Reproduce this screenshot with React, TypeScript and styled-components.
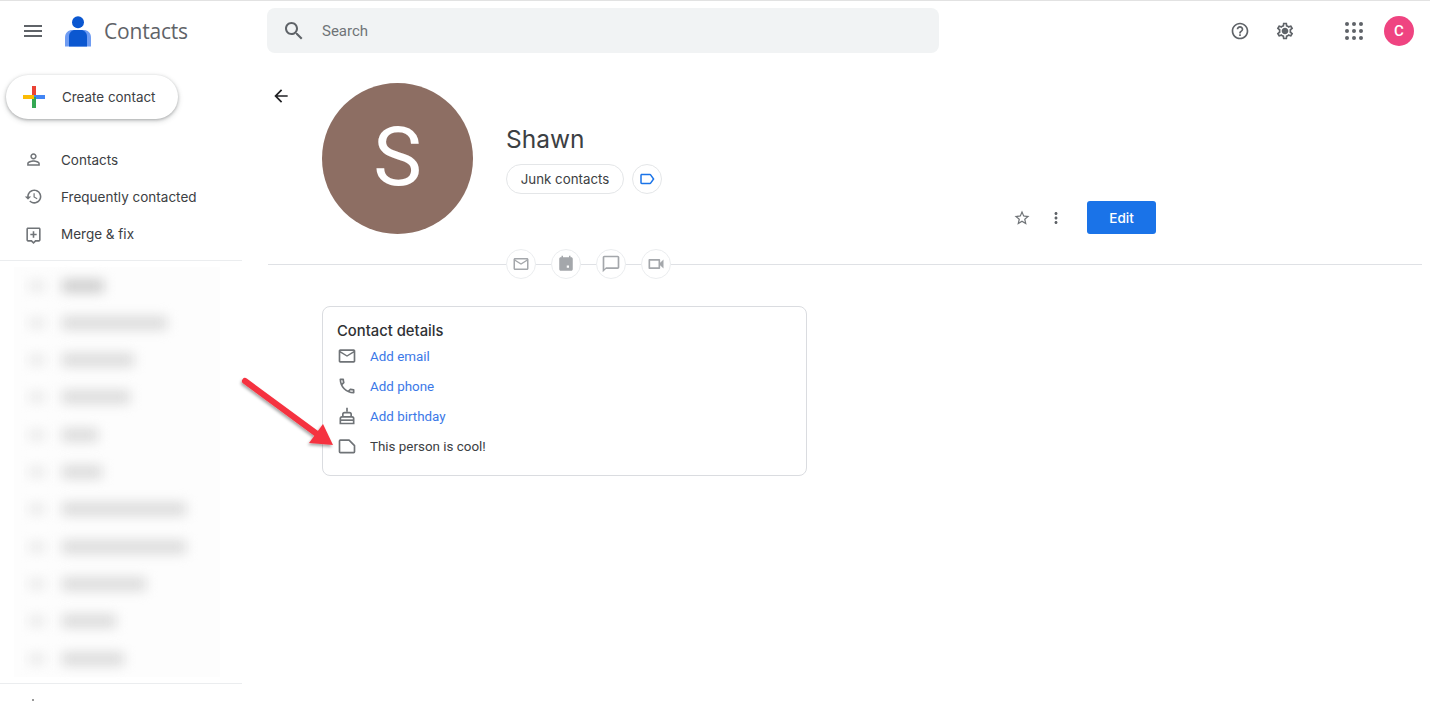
import React from "react";
import styled, { createGlobalStyle } from "styled-components";

const Global = createGlobalStyle`
  html, body { margin: 0; padding: 0; background: #fff; }
  body { font-family: Roboto, "Liberation Sans", sans-serif; overflow: hidden; }
  * { box-sizing: border-box; }
`;

const Page = styled.div`
  position: relative;
  width: 1430px;
  height: 702px;
  overflow: hidden;
  border-top: 1px solid #e2e2e2;
  display: flex;
  flex-direction: column;
`;

const Header = styled.header`
  height: 60px;
  flex: none;
  display: flex;
  align-items: center;
  padding-left: 21px;
`;
const HeaderLeft = styled.div`
  width: 246px;
  display: flex;
  align-items: center;
`;
const MenuGap = styled.span`
  width: 20px;
  flex: none;
`;
const BrandName = styled.span`
  font-family: "Open Sans", Roboto, sans-serif;
  font-size: 21px;
  color: #5f6368;
  margin-left: 13px;
  letter-spacing: -0.2px;
`;
const SearchBox = styled.div`
  width: 672px;
  height: 45px;
  margin-top: -1px;
  background: #f1f3f4;
  border-radius: 8px;
  display: flex;
  align-items: center;
  padding-left: 15px;
  gap: 16px;
  font-size: 15px;
  color: #6f7377;
`;
const HeaderRight = styled.div`
  margin-left: 291px;
  display: flex;
  align-items: center;
`;
const AppGroup = styled.div`
  margin-left: 47px;
  display: flex;
  align-items: center;
  gap: 18px;
`;
const Gap = styled.div`
  width: 25px;
  flex: none;
`;
const UserBadge = styled.div`
  width: 30px;
  height: 30px;
  border-radius: 50%;
  background: #ef4481;
  color: #fff;
  font-size: 15px;
  font-weight: 500;
  display: flex;
  align-items: center;
  justify-content: center;
`;

const Body = styled.div`
  flex: 1;
  display: flex;
  min-height: 0;
`;
const Sidebar = styled.aside`
  width: 242px;
  flex: none;
  padding-top: 14px;
`;
const CreateButton = styled.div`
  margin-left: 6px;
  width: 172px;
  height: 44px;
  border-radius: 22px;
  background: #fff;
  box-shadow: 0 1px 3px 0 rgba(60, 64, 67, 0.35), 0 2px 5px 1px rgba(60, 64, 67, 0.15);
  display: flex;
  align-items: center;
  padding-left: 16px;
  gap: 16px;
  font-family: Inter, Roboto, sans-serif;
  font-size: 13.4px;
  color: #3c4043;
`;
const Nav = styled.nav`
  margin-top: 22px;
  display: flex;
  flex-direction: column;
`;
const NavItem = styled.div`
  height: 37.3px;
  display: flex;
  align-items: center;
  padding-left: 24px;
  gap: 18px;
  font-family: Inter, Roboto, sans-serif;
  font-size: 13.5px;
  color: #3c4043;
`;
const SideRule = styled.div`
  height: 1px;
  background: #ebedef;
`;
const NavRule = styled(SideRule)`
  margin-top: 7px;
`;
const BlurList = styled.div`
  height: 422px;
  padding: 6px 22px 0 14px;
  overflow: hidden;
  display: flex;
  flex-direction: column;
`;
const BlurRow = styled.div`
  height: 37.3px;
  flex: none;
  display: flex;
  align-items: center;
  padding-left: 14px;
  background: #fdfdfd;
`;
const BlurIcon = styled.div`
  width: 18px;
  height: 14px;
  margin-right: 16px;
  flex: none;
  background: #f0f0f0;
  filter: blur(5px);
`;
const BlurBar = styled.div<{ $w: number; $dark?: boolean }>`
  width: ${(p) => p.$w}px;
  height: 14px;
  background: ${(p) => (p.$dark ? "#cfcfcf" : "#dcdcdc")};
  filter: blur(6px);
`;
const FooterMark = styled.div`
  width: 2px;
  height: 2px;
  margin: 15px 0 0 32px;
  background: #9a9a9a;
`;

const Main = styled.main`
  flex: 1;
  padding: 22px 8px 0 26px;
  display: flex;
  flex-direction: column;
`;
const Profile = styled.section`
  width: 888px;
  height: 151px;
  display: flex;
  flex: none;
`;
const BackCol = styled.div`
  width: 54px;
  flex: none;
  padding: 3px 0 0 3px;
`;
const Avatar = styled.div`
  width: 151px;
  height: 151px;
  flex: none;
  border-radius: 50%;
  background: #8d6e63;
  color: #fff;
  font-size: 82px;
  padding-bottom: 3px;
  display: flex;
  align-items: center;
  justify-content: center;
`;
const Identity = styled.div`
  margin-left: 33px;
  padding-top: 39px;
  display: flex;
  flex-direction: column;
`;
const Name = styled.h1`
  margin: 0;
  font-family: Inter, Roboto, sans-serif;
  font-weight: 400;
  font-size: 24.5px;
  line-height: 35px;
  color: #3c4043;
`;
const ChipRow = styled.div`
  margin-top: 7px;
  display: flex;
  gap: 8px;
`;
const Chip = styled.div`
  width: 118px;
  height: 30px;
  border: 1px solid #e4e6e8;
  border-radius: 15px;
  display: flex;
  align-items: center;
  justify-content: center;
  font-family: Inter, Roboto, sans-serif;
  font-size: 13.3px;
  color: #3c4043;
`;
const RoundChip = styled.div`
  width: 30px;
  height: 30px;
  border: 1px solid #e4e6e8;
  border-radius: 50%;
  display: flex;
  align-items: center;
  justify-content: center;
`;
const Actions = styled.div`
  margin-left: auto;
  align-self: flex-end;
  display: flex;
  align-items: center;
`;
const ActionGap = styled.span`
  width: 16px;
  flex: none;
`;
const EditButton = styled.div`
  margin-left: 22px;
  width: 69px;
  height: 33px;
  border-radius: 3px;
  background: #1a73e8;
  color: #fff;
  font-family: Inter, Roboto, sans-serif;
  font-size: 13.5px;
  font-weight: 500;
  display: flex;
  align-items: center;
  justify-content: center;
`;
const DividerRow = styled.div`
  margin-top: 15px;
  height: 30px;
  display: flex;
  align-items: center;
  flex: none;
`;
const RuleStart = styled.div`
  width: 238px;
  height: 1px;
  background: #dfe1e5;
`;
const RuleLink = styled.div`
  width: 15px;
  height: 1px;
  background: #dfe1e5;
`;
const RuleEnd = styled.div`
  flex: 1;
  height: 1px;
  background: #dfe1e5;
`;
const ActionCircle = styled.div`
  width: 30px;
  height: 30px;
  flex: none;
  border: 1px solid #ebedef;
  border-radius: 50%;
  display: flex;
  align-items: center;
  justify-content: center;
`;
const Card = styled.section`
  margin: 27px 0 0 54px;
  width: 485px;
  height: 170px;
  border: 1px solid #dadce0;
  border-radius: 8px;
  padding: 14px 14px 0;
`;
const CardTitle = styled.h2`
  margin: 0;
  font-family: Inter, Roboto, sans-serif;
  font-weight: 500;
  font-size: 14.8px;
  line-height: 20px;
  color: #2f3134;
`;
const DetailRow = styled.div`
  height: 30px;
  display: flex;
  align-items: center;
  gap: 13px;
  font-size: 13.4px;
`;
const DetailRows = styled.div`
  display: flex;
  flex-direction: column;
`;
const DetailLink = styled.span`
  color: #3b78e7;
`;
const DetailText = styled.span`
  color: #3c4043;
`;
const ArrowOverlay = styled.svg`
  position: absolute;
  left: 235px;
  top: 370px;
  overflow: visible;
`;

const Icon = ({ d, size = 24, color = "#5f6368" }: { d: string; size?: number; color?: string }) => (
  <svg width={size} height={size} viewBox="0 0 24 24" fill={color} style={{ flex: "none" }}>
    <path d={d} />
  </svg>
);

const P = {
  menu: "M3 18h18v-2H3v2zm0-5h18v-2H3v2zm0-7v2h18V6H3z",
  search:
    "M15.5 14h-.79l-.28-.27C15.41 12.59 16 11.11 16 9.5 16 5.91 13.09 3 9.5 3S3 5.91 3 9.5 5.91 16 9.5 16c1.61 0 3.09-.59 4.23-1.57l.27.28v.79l5 4.99L20.49 19l-4.99-5zm-6 0C7.01 14 5 11.99 5 9.5S7.01 5 9.5 5 14 7.01 14 9.5 11.99 14 9.5 14z",
  help: "M11 18h2v-2h-2v2zm1-16C6.48 2 2 6.48 2 12s4.48 10 10 10 10-4.48 10-10S17.52 2 12 2zm0 18c-4.41 0-8-3.59-8-8s3.59-8 8-8 8 3.59 8 8-3.59 8-8 8zm0-14c-2.21 0-4 1.79-4 4h2c0-1.1.9-2 2-2s2 .9 2 2c0 2-3 1.75-3 5h2c0-2.25 3-2.5 3-5 0-2.21-1.79-4-4-4z",
  gear: "M19.43 12.98c.04-.32.07-.64.07-.98 0-.34-.03-.66-.07-.98l2.11-1.65c.19-.15.24-.42.12-.64l-2-3.46c-.09-.16-.26-.25-.44-.25-.06 0-.12.01-.17.03l-2.49 1c-.52-.4-1.08-.73-1.69-.98l-.38-2.65C14.46 2.18 14.25 2 14 2h-4c-.25 0-.46.18-.49.42l-.38 2.65c-.61.25-1.17.59-1.69.98l-2.49-1c-.06-.02-.12-.03-.18-.03-.17 0-.34.09-.43.25l-2 3.46c-.13.22-.07.49.12.64l2.11 1.65c-.04.32-.07.65-.07.98 0 .33.03.66.07.98l-2.11 1.65c-.19.15-.24.42-.12.64l2 3.46c.09.16.26.25.44.25.06 0 .12-.01.17-.03l2.49-1c.52.4 1.08.73 1.69.98l.38 2.65c.03.24.24.42.49.42h4c.25 0 .46-.18.49-.42l.38-2.65c.61-.25 1.17-.59 1.69-.98l2.49 1c.06.02.12.03.18.03.17 0 .34-.09.43-.25l2-3.46c.12-.22.07-.49-.12-.64l-2.11-1.65zm-1.98-1.71c.04.31.05.52.05.73 0 .21-.02.43-.05.73l-.14 1.13.89.7 1.08.84-.7 1.21-1.27-.51-1.04-.42-.9.68c-.43.32-.84.56-1.25.73l-1.06.43-.16 1.13-.2 1.35h-1.4l-.19-1.35-.16-1.13-1.06-.43c-.43-.18-.83-.41-1.23-.71l-.91-.7-1.06.43-1.27.51-.7-1.21 1.08-.84.89-.7-.14-1.13c-.03-.31-.05-.54-.05-.74s.02-.43.05-.73l.14-1.13-.89-.7-1.08-.84.7-1.21 1.27.51 1.04.42.9-.68c.43-.32.84-.56 1.25-.73l1.06-.43.16-1.13.2-1.35h1.39l.19 1.35.16 1.13 1.06.43c.43.18.83.41 1.23.71l.91.7 1.06-.43 1.27-.51.7 1.21-1.07.85-.89.7.14 1.13zM12 8c-2.21 0-4 1.79-4 4s1.79 4 4 4 4-1.79 4-4-1.79-4-4-4z",
  person:
    "M12 5.9c1.16 0 2.1.94 2.1 2.1s-.94 2.1-2.1 2.1S9.9 9.16 9.9 8s.94-2.1 2.1-2.1m0 9c2.97 0 6.1 1.46 6.1 2.1v1.1H5.9V17c0-.64 3.13-2.1 6.1-2.1M12 4C9.79 4 8 5.79 8 8s1.79 4 4 4 4-1.79 4-4-1.79-4-4-4zm0 9c-2.67 0-8 1.34-8 4v3h16v-3c0-2.66-5.33-4-8-4z",
  history:
    "M13 3c-4.97 0-9 4.03-9 9H1l3.89 3.89.07.14L9 12H6c0-3.87 3.13-7 7-7s7 3.13 7 7-3.13 7-7 7c-1.93 0-3.68-.79-4.94-2.06l-1.42 1.42C8.27 19.99 10.51 21 13 21c4.97 0 9-4.03 9-9s-4.03-9-9-9zm-1 5v5l4.28 2.54.72-1.21-3.5-2.08V8H12z",
  merge:
    "M19 3H5c-1.1 0-2 .9-2 2v14c0 1.1.9 2 2 2h4l3 3 3-3h4c1.1 0 2-.9 2-2V5c0-1.1-.9-2-2-2zm0 16h-4.83l-2.17 2.17L9.83 19H5V5h14v14zM11 16h2v-3h3v-2h-3V8h-2v3H8v2h3z",
  back: "M20 11H7.83l5.59-5.59L12 4l-8 8 8 8 1.41-1.41L7.83 13H20v-2z",
  label:
    "M17.63 5.84C17.27 5.33 16.67 5 16 5L5 5.01C3.9 5.01 3 5.9 3 7v10c0 1.1.9 1.99 2 1.99L16 19c.67 0 1.27-.33 1.63-.84L22 12l-4.37-6.16zM16 17H5V7h11l3.55 5L16 17z",
  star: "M22 9.24l-7.19-.62L12 2 9.19 8.63 2 9.24l5.46 4.73L5.82 21 12 17.27 18.18 21l-1.63-7.03L22 9.24zM12 15.4l-3.76 2.27 1-4.28-3.32-2.88 4.38-.38L12 6.1l1.71 4.04 4.38.38-3.32 2.88 1 4.28L12 15.4z",
  more: "M12 8c1.1 0 2-.9 2-2s-.9-2-2-2-2 .9-2 2 .9 2 2 2zm0 2c-1.1 0-2 .9-2 2s.9 2 2 2 2-.9 2-2-.9-2-2-2zm0 6c-1.1 0-2 .9-2 2s.9 2 2 2 2-.9 2-2-.9-2-2-2z",
  mail: "M20 4H4c-1.1 0-2 .9-2 2v12c0 1.1.9 2 2 2h16c1.1 0 2-.9 2-2V6c0-1.1-.9-2-2-2zm0 14H4V8l8 5 8-5v10zm-8-7L4 6h16l-8 5z",
  event:
    "M19 3h-1V1h-2v2H8V1H6v2H5c-1.11 0-2 .9-2 2v14c0 1.1.89 2 2 2h14c1.1 0 2-.9 2-2V5c0-1.1-.9-2-2-2zm-3 11v3h-3v-3z",
  chat: "M20 2H4c-1.1 0-2 .9-2 2v18l4-4h14c1.1 0 2-.9 2-2V4c0-1.1-.9-2-2-2zm0 14H6l-2 2V4h16v12z",
  video:
    "M15 8v8H5V8h10m1-2H4c-.55 0-1 .45-1 1v10c0 .55.45 1 1 1h12c.55 0 1-.45 1-1v-3.5l4 4v-11l-4 4V7c0-.55-.45-1-1-1z",
  phone:
    "M6.54 5c.06.89.21 1.76.45 2.59l-1.2 1.2c-.41-1.2-.67-2.47-.76-3.79h1.51m9.86 12.02c.85.24 1.72.39 2.6.45v1.49c-1.32-.09-2.59-.35-3.8-.75l1.2-1.19M7.5 3H4c-.55 0-1 .45-1 1 0 9.39 7.61 17 17 17 .55 0 1-.45 1-1v-3.49c0-.55-.45-1-1-1-1.24 0-2.45-.2-3.57-.57-.1-.04-.21-.05-.31-.05-.26 0-.51.1-.71.29l-2.2 2.2c-2.83-1.45-5.15-3.76-6.59-6.59l2.2-2.2c.28-.28.36-.67.25-1.02C8.7 6.45 8.5 5.25 8.5 4c0-.55-.45-1-1-1z",
};

const AppsIcon = () => (
  <svg width="24" height="24" viewBox="0 0 24 24" fill="#5f6368" style={{ flex: "none" }}>
    {[5, 12, 19].flatMap((y) =>
      [5, 12, 19].map((x) => <circle key={`${x}-${y}`} cx={x} cy={y} r="2" />)
    )}
  </svg>
);

const Logo = () => (
  <svg width="26" height="31" viewBox="0 0 26 31" style={{ flex: "none" }}>
    <circle cx="13" cy="6.300" r="6" fill="#0b57d0" />
    <path d="M0 30.500v-9c0-5 3.500-7.500 7.500-7.500h11c4 0 7.500 2.500 7.500 7.500v9z" fill="#6f9cf2" />
    <path d="M4 30.500v-10c0-4 3-6.500 6-6.500h6c3 0 6 2.500 6 6.500v10z" fill="#0b57d0" />
  </svg>
);

const PlusIcon = () => (
  <svg width="24" height="24" viewBox="0 0 24 24" style={{ flex: "none" }}>
    <rect x="10" y="1" width="4" height="11" fill="#ea4335" />
    <rect x="12" y="10" width="11" height="4" fill="#4285f4" />
    <rect x="10" y="12" width="4" height="11" fill="#34a853" />
    <rect x="1" y="10" width="11" height="4" fill="#fbbc04" />
  </svg>
);

const CakeIcon = () => (
  <svg width="20" height="20" viewBox="0 0 24 24" fill="none" stroke="#6f7377" strokeWidth="2" style={{ flex: "none" }}>
    <path d="M12 2v5" />
    <path d="M7 13v-3a2 2 0 0 1 2-2h6a2 2 0 0 1 2 2v3" />
    <path d="M4 21v-6a2 2 0 0 1 2-2h12a2 2 0 0 1 2 2v6z" />
    <path d="M4 17h16" />
  </svg>
);

const NoteIcon = () => (
  <svg width="20" height="20" viewBox="0 0 24 24" fill="none" stroke="#6f7377" strokeWidth="2" strokeLinejoin="round" style={{ flex: "none" }}>
    <path d="M3 6a1 1 0 0 1 1-1h10.500l6.500 6.500V19a1 1 0 0 1-1 1H4a1 1 0 0 1-1-1z" />
  </svg>
);

const blurred = [
  { w: 42, dark: true },
  { w: 105 },
  { w: 72 },
  { w: 68 },
  { w: 36 },
  { w: 40 },
  { w: 124 },
  { w: 124 },
  { w: 84 },
  { w: 54 },
  { w: 62 },
];

export default function App() {
  return (
    <Page>
      <Global />
      <Header>
        <HeaderLeft>
          <Icon d={P.menu} />
          <MenuGap />
          <Logo />
          <BrandName>Contacts</BrandName>
        </HeaderLeft>
        <SearchBox>
          <Icon d={P.search} />
          Search
        </SearchBox>
        <HeaderRight>
          <Icon d={P.help} size={20} />
          <Gap />
          <Icon d={P.gear} size={20} />
        </HeaderRight>
        <AppGroup>
          <AppsIcon />
          <UserBadge>C</UserBadge>
        </AppGroup>
      </Header>
      <Body>
        <Sidebar>
          <CreateButton>
            <PlusIcon />
            Create contact
          </CreateButton>
          <Nav>
            <NavItem>
              <Icon d={P.person} size={19} color="#707478" />
              Contacts
            </NavItem>
            <NavItem>
              <Icon d={P.history} size={19} color="#707478" />
              Frequently contacted
            </NavItem>
            <NavItem>
              <Icon d={P.merge} size={19} color="#707478" />
              Merge &amp; fix
            </NavItem>
          </Nav>
          <NavRule />
          <BlurList>
            {blurred.map((b, i) => (
              <BlurRow key={i}>
                <BlurIcon />
                <BlurBar $w={b.w} $dark={b.dark} />
              </BlurRow>
            ))}
          </BlurList>
          <SideRule />
          <FooterMark />
        </Sidebar>
        <Main>
          <Profile>
            <BackCol>
              <Icon d={P.back} size={20} color="#202124" />
            </BackCol>
            <Avatar>S</Avatar>
            <Identity>
              <Name>Shawn</Name>
              <ChipRow>
                <Chip>Junk contacts</Chip>
                <RoundChip>
                  <Icon d={P.label} size={18} color="#1a73e8" />
                </RoundChip>
              </ChipRow>
            </Identity>
            <Actions>
              <Icon d={P.star} size={18} color="#6f7377" />
              <ActionGap />
              <Icon d={P.more} size={18} />
              <EditButton>Edit</EditButton>
            </Actions>
          </Profile>
          <DividerRow>
            <RuleStart />
            <ActionCircle>
              <Icon d={P.mail} size={18} color="#a4a7ab" />
            </ActionCircle>
            <RuleLink />
            <ActionCircle>
              <Icon d={P.event} size={18} color="#a4a7ab" />
            </ActionCircle>
            <RuleLink />
            <ActionCircle>
              <Icon d={P.chat} size={20} color="#a4a7ab" />
            </ActionCircle>
            <RuleLink />
            <ActionCircle>
              <Icon d={P.video} size={20} color="#a4a7ab" />
            </ActionCircle>
            <RuleEnd />
          </DividerRow>
          <Card>
            <CardTitle>Contact details</CardTitle>
            <DetailRows>
              <DetailRow>
                <Icon d={P.mail} size={20} color="#6f7377" />
                <DetailLink>Add email</DetailLink>
              </DetailRow>
              <DetailRow>
                <Icon d={P.phone} size={20} color="#6f7377" />
                <DetailLink>Add phone</DetailLink>
              </DetailRow>
              <DetailRow>
                <CakeIcon />
                <DetailLink>Add birthday</DetailLink>
              </DetailRow>
              <DetailRow>
                <NoteIcon />
                <DetailText>This person is cool!</DetailText>
              </DetailRow>
            </DetailRows>
          </Card>
        </Main>
      </Body>
      <ArrowOverlay width="110" height="90" viewBox="0 0 110 90">
        <defs>
          <filter id="arrowShadow" x="-20%" y="-20%" width="140%" height="140%">
            <feDropShadow dx="-1" dy="2" stdDeviation="1.500" floodColor="#000" floodOpacity="0.35" />
          </filter>
        </defs>
        <g filter="url(#arrowShadow)">
          <path d="M10 10 L82 63" stroke="#f5333f" strokeWidth="6" strokeLinecap="round" />
          <path d="M98 74 L74 72 L88 53 z" fill="#f5333f" />
        </g>
      </ArrowOverlay>
    </Page>
  );
}
